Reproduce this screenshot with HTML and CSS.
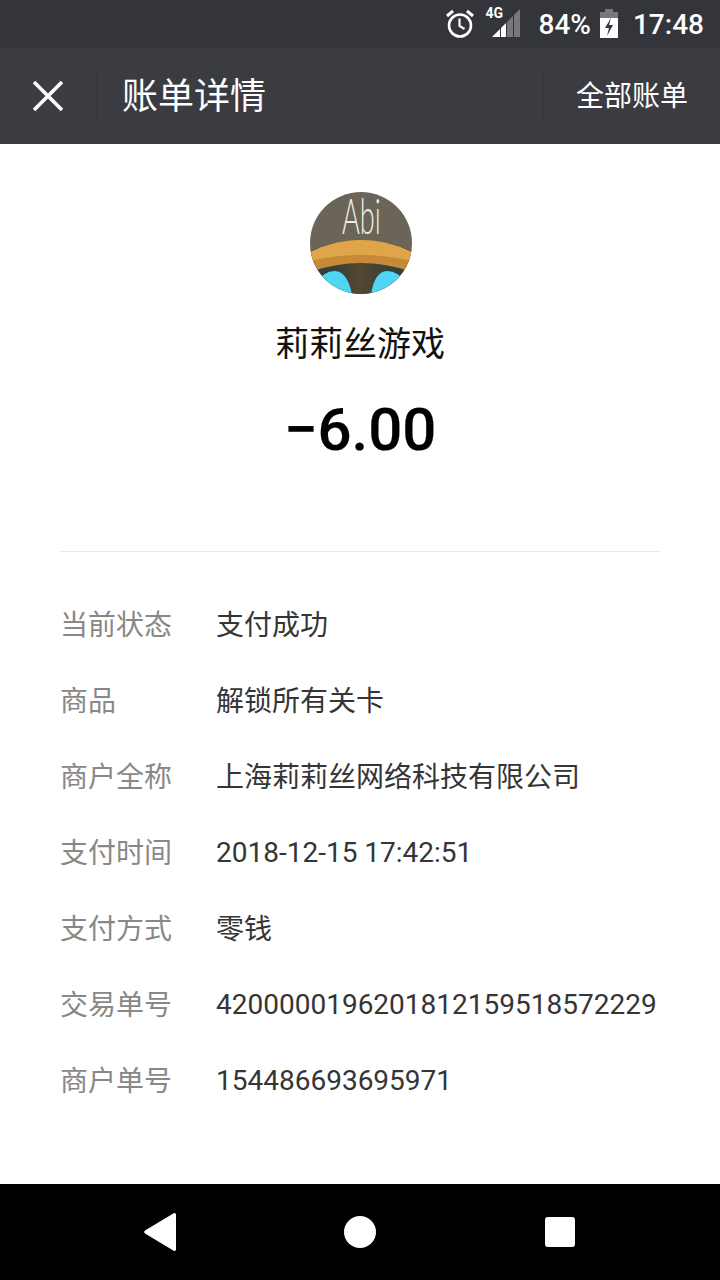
FILE: index.html
```html
<!DOCTYPE html>
<html lang="zh">
<head>
    <meta charset="UTF-8">
    <title>账单详情</title>
    <link rel="stylesheet" href="styles.css">
</head>
<body>
    <div class="status-bar">
        <svg class="alarm" width="30" height="30" viewBox="0 0 30 30"><circle cx="15" cy="16.500" r="11" fill="none" stroke="#fff" stroke-width="2.600"/><path d="M14.500 9.500v7.500l5 3" fill="none" stroke="#fff" stroke-width="2.200"/><path d="M2 7l6-5M28 7l-6-5" stroke="#fff" stroke-width="3"/></svg>
        <div class="signal">
            <span class="net">4G</span>
            <svg width="30" height="28" viewBox="0 0 30 28"><path d="M0 28L8 20V28zM9 19L14 14V28H9z" fill="#fff"/><path d="M15 13L21 7V28H15zM22 6L28 0V28H22z" fill="#77787b"/></svg>
        </div>
        <span class="battery-text">84%</span>
        <svg width="20" height="30" viewBox="0 0 20 30"><path d="M6 0h8v3h5v6H1V3h5z" fill="#77787b"/><path d="M1 9h18v20H1z" fill="#fff"/><path d="M12 9l-6 10h4l-2 8 6-11h-4z" fill="#33353a"/></svg>
        <span class="clock">17:48</span>
    </div>

    <header class="nav">
        <div class="nav-close">
            <svg width="30" height="30" viewBox="0 0 30 30"><path d="M1 1l28 28M29 1L1 29" stroke="#fff" stroke-width="3.600"/></svg>
        </div>
        <h1 class="nav-title">账单详情</h1>
        <a class="nav-link">全部账单</a>
    </header>

    <main class="content">
        <section class="summary">
            <svg class="avatar" width="102" height="102" viewBox="0 0 102 102">
                <defs>
                    <clipPath id="round"><circle cx="51" cy="51" r="51"/></clipPath>
                    <linearGradient id="pillar" x1="0" x2="1" y1="0" y2="0"><stop offset="0.200" stop-color="#33403f"/><stop offset="0.500" stop-color="#54462e"/><stop offset="0.800" stop-color="#33403f"/></linearGradient>
                </defs>
                <g clip-path="url(#round)">
                    <rect width="102" height="102" fill="#6b6459"/>
                    <path d="M0 59Q51 38 102 59V102H0z" fill="url(#pillar)"/>
                    <path d="M0 60Q51 36 102 60V80Q51 62 0 80z" fill="#c58a38"/>
                    <path d="M0 60Q51 36 102 60V69Q51 57 0 69z" fill="#e0a548"/>
                    <path d="M4 92Q14 79 25 79Q38 80 42 103H0V92z" fill="#4ed6f4"/>
                    <path d="M98 92Q88 79 77 79Q64 80 61 103H102V92z" fill="#4ed6f4"/>
                </g>
                <text class="avatar-text" transform="translate(32 42) scale(0.680 1.250)">Abi</text>
            </svg>
            <div class="payee">莉莉丝游戏</div>
            <div class="amount">−6.00</div>
        </section>

        <dl class="details">
            <div class="row"><dt>当前状态</dt><dd>支付成功</dd></div>
            <div class="row"><dt>商品</dt><dd>解锁所有关卡</dd></div>
            <div class="row"><dt>商户全称</dt><dd>上海莉莉丝网络科技有限公司</dd></div>
            <div class="row"><dt>支付时间</dt><dd class="num">2018-12-15 17:42:51</dd></div>
            <div class="row"><dt>支付方式</dt><dd>零钱</dd></div>
            <div class="row"><dt>交易单号</dt><dd class="num">4200000196201812159518572229</dd></div>
            <div class="row"><dt>商户单号</dt><dd class="num">154486693695971</dd></div>
        </dl>
    </main>

    <footer class="nav-keys">
        <svg class="key-back" width="32" height="38" viewBox="0 0 32 38"><path d="M32 1.500v35a1.500 1.500 0 0 1-2.300 1.200L1 20.500a1.800 1.800 0 0 1 0-3L29.700.3A1.500 1.500 0 0 1 32 1.500z" fill="#fff"/></svg>
        <div class="key-home"></div>
        <div class="key-recent"></div>
    </footer>
</body>
</html>
```

FILE: styles.css
```css
body { margin: 0; width: 720px; height: 1280px; display: flex; flex-direction: column; background-color: #fff; font-family: "Roboto", "Noto Sans CJK SC", sans-serif; color: #353535; overflow: hidden; }
.status-bar { height: 48px; background-color: #33353a; display: flex; align-items: center; justify-content: flex-end; padding-right: 16px; color: #fff; font-size: 28px; font-weight: 500; }
.alarm { margin-right: 17px; }
.signal { position: relative; width: 30px; height: 28px; margin-top: -2px; margin-right: 17px; }
.net { position: absolute; left: -6px; top: -4px; font-size: 14px; line-height: 16px; font-weight: 700; }
.battery-text { margin-right: 8px; }
.clock { margin-left: 14px; }
.nav { height: 96px; background-color: #3a3c42; display: flex; align-items: center; color: #fff; }
.nav-close { width: 97px; height: 48px; display: flex; align-items: center; justify-content: center; border-right: 1px solid #33353a; box-sizing: border-box; }
.nav-title { flex: 1; margin: 0; padding: 2px 0 0 25px; font-size: 36px; line-height: 48px; font-weight: 400; }
.nav-link { height: 48px; line-height: 50px; padding: 0 32px; border-left: 1px solid #33353a; font-size: 28px; }
.content { flex: 1; padding: 48px 60px 0; }
.summary { display: flex; flex-direction: column; align-items: center; height: 359px; border-bottom: 1px solid #e9e9e9; }
.avatar { margin-left: 2px; overflow: visible; }
.avatar-text { font-family: "Lato", sans-serif; font-weight: 300; font-size: 40px; fill: #f0ece2; }
.payee { margin-top: 28px; font-size: 34px; line-height: 44px; color: #111; }
.amount { margin-top: 28px; font-size: 60px; line-height: 72px; font-weight: 500; color: #000; -webkit-text-stroke: 0.2px #000; }
.details { margin: 33px 0 0; }
.row { display: flex; height: 76px; align-items: center; font-size: 28px; }
.row dt { width: 156px; color: #888; }
.row dd { margin: 0; white-space: nowrap; }
.row .num { padding-top: 2px; }
.nav-keys { height: 96px; background-color: #000; display: flex; align-items: center; gap: 168px; padding-left: 144px; }
.key-home { width: 32px; height: 32px; border-radius: 50%; background-color: #fff; }
.key-recent { width: 30px; height: 30px; margin-left: 1px; border-radius: 3px; background-color: #fff; }
```
